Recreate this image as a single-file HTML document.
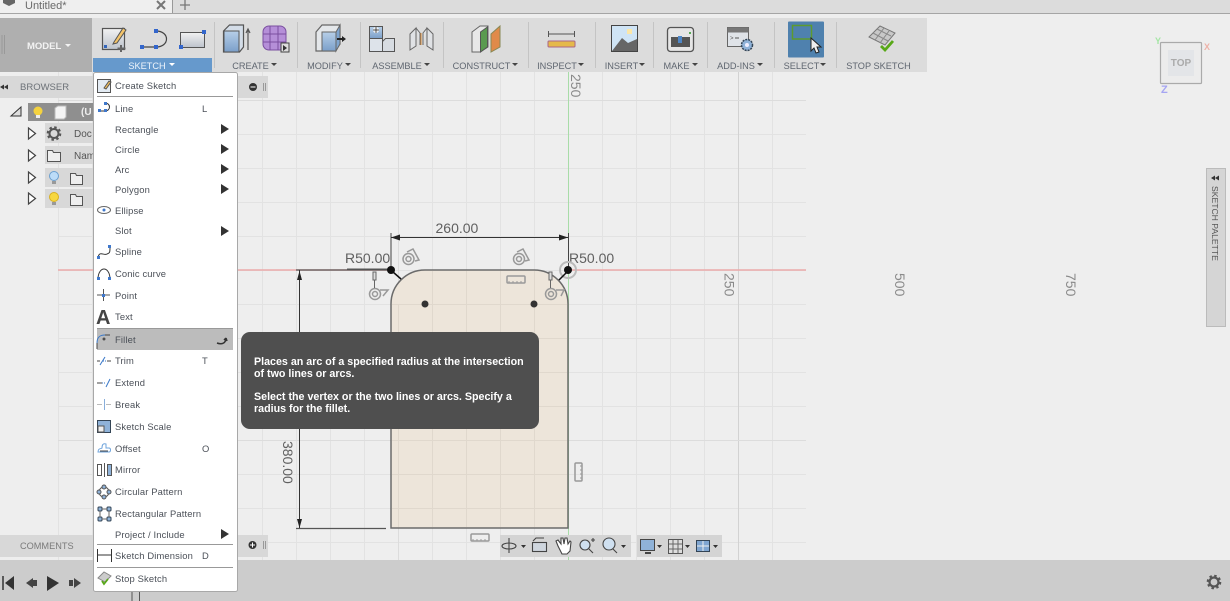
<!DOCTYPE html>
<html><head><meta charset="utf-8"><style>
html,body{margin:0;padding:0;width:1230px;height:601px;overflow:hidden;background:#eee}
svg{display:block;position:absolute;left:0;top:0;filter:blur(.3px)}
text{font-family:"Liberation Sans",sans-serif}
.m{font-size:9.4px;fill:#4b5058;letter-spacing:.15px}
.t{font-size:9.2px;fill:#5f6670;text-anchor:middle}
.d{font-size:14px;fill:#606060}
.a{font-size:14px;fill:#8a8a8a}
.tip{font-size:10.7px;font-weight:bold;fill:#fff}
</style></head><body>
<svg width="1230" height="601" viewBox="0 0 1230 601" xmlns="http://www.w3.org/2000/svg">
<defs>
<pattern id="g" x="58" y="32" width="34" height="34" patternUnits="userSpaceOnUse"><path d="M.5 0V34M0 .5H34" stroke="#e2e2e2" fill="none"/></pattern>
<linearGradient id="bl" x1="0" y1="0" x2="0" y2="1"><stop offset="0" stop-color="#b7cfe8"/><stop offset="1" stop-color="#7b9fc9"/></linearGradient>
<linearGradient id="gr" x1="0" y1="0" x2="0" y2="1"><stop offset="0" stop-color="#f2f2f2"/><stop offset="1" stop-color="#bdc3cc"/></linearGradient>
</defs>
<rect width="1230" height="601" fill="#eee"/>
<rect x="58" y="72" width="748" height="488" fill="url(#g)"/>
<path d="M398.500 72V560" stroke="#dcdcdc"/><path d="M738.500 72V560" stroke="#d2d2d2"/><path d="M58 100.500H806M58 440.500H806" stroke="#dcdcdc"/>
<path d="M58 270H391M568 270H806" stroke="#ebaaaa" stroke-width="1.500"/>
<path d="M568.500 72V560" stroke="#a8dca8"/>
<!-- top -->
<rect width="1230" height="13" fill="#dcdcdc"/><rect width="172" height="13" fill="#efefef"/>
<path d="M0 13.500H1230" stroke="#a5a5a5"/><path d="M172.500 0V13" stroke="#999"/>
<path d="M3 0H15V3L9 6 3 3Z" fill="#666"/>
<text x="25" y="9" font-size="11" fill="#6a6a6a">Untitled*</text>
<path d="M157 1l8 8M165 1l-8 8" stroke="#777" stroke-width="2"/>
<path d="M185 0V10M180 5H190" stroke="#777" stroke-width="1.300"/>
<!-- toolbar -->
<rect y="18" width="927" height="54" fill="#dcdcdc"/>
<rect y="18" width="92" height="54" fill="#afafaf"/>
<path d="M2 35V54M4.500 35V54" stroke="#999"/>
<text x="27" y="49" font-size="9.500" font-weight="bold" fill="#f3f3f3">MODEL</text><path d="M65 44h6l-3 3z" fill="#f3f3f3"/>
<rect x="93" y="58" width="119" height="14" fill="#6699cc"/>
<text x="147" y="69" font-size="9.200" fill="#eef4fb" text-anchor="middle">SKETCH</text><path d="M169 63h6l-3 3z" fill="#fff"/>
<!-- separators -->
<path d="M214.500 22V68M297.500 22V68M360.500 22V68M443.500 22V68M528.500 22V68M595.500 22V68M653.500 22V68M707.500 22V68M774.500 22V68M836.500 22V68" stroke="#c4c4c4" stroke-width="1"/>
<!-- labels -->
<text class="t" x="250.500" y="69">CREATE</text><path d="M271 63h6l-3 3z" fill="#444"/>
<text class="t" x="325" y="69">MODIFY</text><path d="M345 63h6l-3 3z" fill="#444"/>
<text class="t" x="397" y="69">ASSEMBLE</text><path d="M424 63h6l-3 3z" fill="#444"/>
<text class="t" x="481.500" y="69">CONSTRUCT</text><path d="M512 63h6l-3 3z" fill="#444"/>
<text class="t" x="557" y="69">INSPECT</text><path d="M578 63h6l-3 3z" fill="#444"/>
<text class="t" x="621.500" y="69">INSERT</text><path d="M639 63h6l-3 3z" fill="#444"/>
<text class="t" x="676.500" y="69">MAKE</text><path d="M692 63h6l-3 3z" fill="#444"/>
<text class="t" x="736" y="69">ADD-INS</text><path d="M757 63h6l-3 3z" fill="#444"/>
<text class="t" x="801.500" y="69">SELECT</text><path d="M820 63h6l-3 3z" fill="#444"/>
<text class="t" x="878.500" y="69">STOP SKETCH</text>
<!-- sketch icons -->
<rect x="102.500" y="28.500" width="22" height="21" fill="url(#gr)" stroke="#555" stroke-width="1.200"/>
<path d="M114 42l9-14 3 2-9 13-4 1z" fill="#f4c469" stroke="#555"/><path d="M121 45v7M117.500 48.500h8" stroke="#666" stroke-width="2"/>
<rect x="104" y="45" width="3" height="3" fill="#3366bb"/>
<path d="M141 47H156C170 47 170 31 156 31" fill="none" stroke="#444" stroke-width="1.200"/>
<g fill="#3366cc"><rect x="140" y="45" width="4" height="4"/><rect x="154" y="45" width="4" height="4"/><rect x="154" y="29" width="4" height="4"/></g>
<rect x="180.500" y="32.500" width="24" height="15" fill="url(#gr)" stroke="#555"/><rect x="179" y="45" width="4" height="4" fill="#3366cc"/><rect x="202" y="30" width="4" height="4" fill="#3366cc"/>
<!-- create -->
<path d="M223.500 31l6-6h14v22l-4 5H223.500z" fill="#d4dde8" stroke="#555" stroke-width="1.200"/><rect x="224" y="31" width="15" height="21" fill="url(#bl)" stroke="#555"/>
<path d="M248 50V30M246 33l2-4 2 4" stroke="#555" fill="none" stroke-width="1.200"/>
<rect x="263" y="26" width="23" height="24" rx="6" fill="#b58fd8" stroke="#7a4f9f"/><path d="M263 34h23M263 42h23M270 26v24M278 26v24" stroke="#7a4f9f"/>
<rect x="281" y="43" width="8" height="9" fill="#ddd" stroke="#444"/><path d="M283 45l4 3-4 3z" fill="#333"/>
<!-- modify -->
<path d="M316 32l6-7h18v19l-5 7H316z" fill="#e4e7ea" stroke="#666" stroke-width="1.200"/><path d="M322 32h14v19h-14z" fill="url(#bl)" stroke="#666"/><path d="M336 32l4-7v19l-4 7z" fill="#7fa5d0" stroke="#666"/><path d="M337 38h5v-2l4 3-4 3v-2h-5z" fill="#222"/>
<!-- assemble -->
<rect x="369.500" y="26.500" width="13" height="12" fill="url(#bl)" stroke="#555"/><rect x="369.500" y="38.500" width="13" height="13" fill="#dde3ea" stroke="#555"/><path d="M382.500 41.500l3-3h9v13h-12z" fill="#d7dce2" stroke="#555"/>
<path d="M373 30h6M376 27v6" stroke="#fff" stroke-width="3"/><path d="M373 30h6M376 27v6" stroke="#444"/>
<path d="M410 34l6-6v18l-6 4zM433 34l-6-6v18l6 4zM416 28l4 5v12M427 28l-4 5v12" fill="#e0e2e5" stroke="#666"/><path d="M421 33v12" stroke="#d58a3a"/>
<!-- construct -->
<path d="M472 32l8-6h8v21l-8 5H472z" fill="#e8e8e8" stroke="#666"/><path d="M480.500 32l7-5v20l-7 5z" fill="#5a9a50" stroke="#555"/>
<path d="M491 34l9-8v21l-9 5z" fill="#e08a4a" stroke="#885"/>
<!-- inspect -->
<path d="M548.500 31V37M574.500 31V37M548 34H575" stroke="#555"/><rect x="548" y="41" width="27" height="6" rx="1" fill="#e5b94a" stroke="#a68"/>
<!-- insert -->
<rect x="611.500" y="25.500" width="26" height="26" fill="#cfe4f5" stroke="#444"/><path d="M612 51l10-13 6 5 9-4v12z" fill="#666"/><rect x="627" y="29" width="5" height="5" fill="#fce7a8"/>
<!-- make -->
<rect x="667.500" y="27.500" width="26" height="24" rx="3" fill="#e6e6e6" stroke="#555" stroke-width="1.300"/><rect x="671" y="37" width="19" height="10" fill="#555"/><rect x="678" y="36" width="4" height="7" fill="#4f87c7"/><rect x="689" y="32" width="2" height="2" fill="#5a5"/>
<!-- add-ins -->
<rect x="727.500" y="27.500" width="21" height="19" fill="#dfe3e8" stroke="#666"/><rect x="727.500" y="27.500" width="21" height="5" fill="#777"/><text x="730" y="40" font-size="6" fill="#555">&gt;</text><path d="M735 38h4" stroke="#555"/>
<circle cx="747" cy="45" r="5.500" fill="#8fb2d8" stroke="#345" stroke-dasharray="2 1" stroke-width="1.500"/><circle cx="747" cy="45" r="2" fill="#eef"/>
<!-- select -->
<rect x="788" y="21.500" width="36" height="36" rx="1" fill="#4f81ae"/><rect x="792.500" y="25.500" width="19" height="13.500" fill="none" stroke="#5d9a2e" stroke-width="1.500"/>
<path d="M811 38v13l3-3 2 5 3-1-2-5h4z" fill="#eee" stroke="#222"/>
<!-- stop -->
<path d="M869 37l11-11 15 7-10 12z" fill="#c8c8c8" stroke="#777"/><path d="M873 33l15 8M877 29l14 7M875 40l9-12M880 43l9-12" stroke="#888"/>
<path d="M881 46l4 4 8-9" fill="none" stroke="#58a818" stroke-width="2.800"/>
<!-- browser -->
<rect y="76" width="268" height="22" fill="#d8d8d8"/>
<path d="M4 86l4-2.500v5zM8 86l4-2.500v5z" transform="translate(-4 1)" fill="#333"/>
<text x="20" y="90" font-size="9.500" fill="#6d7278">BROWSER</text>
<circle cx="253" cy="87" r="4" fill="#333"/><path d="M250.500 87h5" stroke="#fff"/><path d="M263.500 83V91M265.500 83V91" stroke="#999"/>
<path d="M11 116l10-9v9z" fill="#ddd" stroke="#333"/>
<rect x="28" y="103" width="66" height="18" fill="#8f8f8f"/>
<circle cx="38" cy="111" r="4.500" fill="#f4d23f"/><rect x="36" y="115" width="4" height="3" fill="#eee"/>
<path d="M55 108l3-2h8v11l-2 2H55z" fill="#f4f4f4" stroke="#bbb"/>
<text x="81" y="115" font-size="10" font-weight="bold" fill="#eee">(U</text>
<g fill="#fff" stroke="#444" stroke-width="1.200"><path d="M28.500 128v11l7-5.500z"/><path d="M28.500 150v11l7-5.500z"/><path d="M28.500 172v11l7-5.500z"/><path d="M28.500 193v11l7-5.500z"/></g>
<rect x="45" y="123" width="49" height="20" fill="#d8d8d8"/><rect x="45" y="146" width="49" height="18" fill="#d8d8d8"/><rect x="45" y="168" width="49" height="19" fill="#d8d8d8"/><rect x="45" y="189" width="49" height="19" fill="#d8d8d8"/>
<circle cx="54" cy="133.500" r="4.500" fill="none" stroke="#555" stroke-width="2"/><circle cx="54" cy="133.500" r="6.300" fill="none" stroke="#555" stroke-width="2" stroke-dasharray="2.500 2.450"/>
<text x="74" y="137" font-size="10" fill="#555">Doc</text><text x="74" y="159" font-size="10" fill="#555">Nam</text>
<path d="M47.500 150.500h5l1 2h7v9h-13z" fill="#eee" stroke="#555"/>
<circle cx="54" cy="176" r="4.500" fill="#bcdcf8" stroke="#6a9fd0"/><rect x="52" y="181" width="4" height="3" fill="#999"/>
<path d="M70.500 173.500h5l1 2h6v9h-12z" fill="#eee" stroke="#555"/>
<circle cx="54" cy="197" r="4.500" fill="#f7d73f" stroke="#d8b020"/><rect x="52" y="202" width="4" height="3" fill="#999"/>
<path d="M70.500 194.500h5l1 2h6v9h-12z" fill="#eee" stroke="#555"/>
<!-- comments -->
<rect y="535" width="268" height="22" fill="#d8d8d8"/>
<text x="20" y="549" font-size="9.200" fill="#7a7a7a">COMMENTS</text>
<circle cx="252.500" cy="545" r="4" fill="#333"/><path d="M250 545h5M252.500 542.500v5" stroke="#fff"/><path d="M263.500 541V549M265.500 541V549" stroke="#999"/>
<!-- bottom -->
<rect y="560" width="1230" height="41" fill="#cccccc"/>
<path d="M3 576V590" stroke="#333" stroke-width="1.500"/><path d="M14 576v14l-9-7z" fill="#333"/>
<path d="M26 583l7-5v10zM33 580h4v6h-4z" fill="#444"/><path d="M47 576l12 7-12 8z" fill="#333"/>
<path d="M81 583l-7-5v10zM69 580h4v6h-4z" fill="#444"/>
<path d="M132 592V601M139.500 592V601" stroke="#555"/>
<circle cx="1214" cy="582" r="4.500" fill="none" stroke="#555" stroke-width="2.200"/><circle cx="1214" cy="582" r="6.300" fill="none" stroke="#555" stroke-width="2" stroke-dasharray="2.500 2.450"/>
<!-- axis labels -->
<text class="a" transform="translate(571 74) rotate(90)">250</text>
<text class="a" transform="translate(724.500 273) rotate(90)">250</text>
<text class="a" transform="translate(895 273) rotate(90)">500</text>
<text class="a" transform="translate(1066 273) rotate(90)">750</text>
<!-- sketch -->
<path d="M391 528V304A34 34 0 0 1 425 270H534A34 34 0 0 1 568 304V528Z" fill="#ede5da"/>
<g stroke="#e0d8cd"><path d="M398.500 304V527M432.500 271V527M466.500 271V527M500.500 271V527M534.500 271V527M392 304.500H567M392 338.500H567M392 372.500H567M392 406.500H567M392 440.500H567M392 474.500H567M392 508.500H567"/></g>
<path d="M391 528V304A34 34 0 0 1 425 270H534A34 34 0 0 1 568 304V528Z" fill="none" stroke="#6b6b6b" stroke-width="1.500"/>
<path d="M391 233V270M568.500 233V270" stroke="#444"/>
<path d="M391 237.500H568" stroke="#333"/><path d="M391 237.500l9-3v6zM568 237.500l-9-3v6z" fill="#222"/>
<text class="d" x="435.500" y="233">260.00</text>
<text class="d" x="345" y="263">R50.00</text>
<text class="d" x="569" y="263">R50.00</text>
<path d="M347 269.500H391" stroke="#555" stroke-width="2"/>
<path d="M296 270H391M296 528.500H386" stroke="#555" stroke-width="1.200"/>
<path d="M299.500 270V528" stroke="#333"/><path d="M299.500 271l-2.500 9h5zM299.500 528l-2.500-9h5z" fill="#222"/>
<text class="d" transform="translate(283 441) rotate(90)">380.00</text>
<circle cx="391" cy="270" r="4" fill="#111"/><path d="M393 272l8 7" stroke="#111" stroke-width="1.500"/>
<circle cx="568" cy="270" r="8" fill="none" stroke="#bbb" stroke-width="2"/>
<circle cx="568" cy="270" r="4" fill="#111"/><path d="M566 273l-7 7" stroke="#111" stroke-width="1.500"/>
<circle cx="425" cy="304" r="3.500" fill="#333"/><circle cx="534" cy="304" r="3.500" fill="#333"/>
<g fill="none" stroke="#999" stroke-width="1.500">
<circle cx="408.500" cy="259" r="5.500"/><circle cx="408.500" cy="259" r="2.500"/><path d="M407 252l6-3 6 11-4 1"/>
<circle cx="519" cy="259" r="5.500"/><circle cx="519" cy="259" r="2.500"/><path d="M517 252l6-3 6 11-4 1"/>
<circle cx="375" cy="294" r="5.500"/><circle cx="375" cy="294" r="2.500"/><path d="M380 290h8l-5 6"/>
<circle cx="551" cy="294" r="5.500"/><circle cx="551" cy="294" r="2.500"/><path d="M556 290h8l-3 6"/>
<rect x="507" y="276" width="18" height="7" rx="1"/><rect x="471" y="534" width="18" height="7" rx="1"/><rect x="575" y="463" width="7" height="18" rx="1"/>
<path d="M509 281v2M513 281v2M517 281v2M521 281v2M473 539v2M477 539v2M481 539v2M485 539v2M580 466h2M580 470h2M580 474h2M580 478h2" stroke-width="1"/>
</g>
<path d="M373 272h3v8h-3zM549 272h3v8h-3zM374.500 280v8M550.500 280v8" stroke="#666" fill="#ddd"/>
<!-- tip -->
<rect x="241" y="332" width="298" height="97" rx="9" fill="#4f4f4f"/>
<text class="tip" x="254" y="365">Places an arc of a specified radius at the intersection</text>
<text class="tip" x="254" y="377">of two lines or arcs.</text>
<text class="tip" x="254" y="400">Select the vertex or the two lines or arcs. Specify a</text>
<text class="tip" x="254" y="412">radius for the fillet.</text>
<!-- nav -->
<rect x="500" y="535" width="131" height="22" fill="#d4d4d4"/><rect x="637" y="535" width="85" height="22" fill="#d4d4d4"/>
<g fill="none" stroke="#444" stroke-width="1.100">
<ellipse cx="509" cy="546" rx="7" ry="3"/><path d="M509 538v15"/>
<path d="M533 541l3-3h8"/><rect x="532.500" y="542.500" width="14" height="9" fill="#cfd6de"/>
<path d="M558 546l-2-5 2-1 3 4 0-6 2 0 1 6 1-6 2 0 1 6 2-3 1 1-1 9-3 3h-5z" fill="#fff"/>
<circle cx="585" cy="545" r="5" fill="#cfe0f0"/><path d="M589 549l4 4M591 540h4M593 538v4"/>
<circle cx="609" cy="544" r="6" fill="#cfe0f0"/><path d="M613 549l4 4"/>
</g>
<path d="M521 545h5l-2.500 3zM621 545h5l-2.500 3zM657 545h5l-2.500 3zM685 545h5l-2.500 3zM713 545h5l-2.500 3z" fill="#333"/>
<rect x="640.500" y="539.500" width="14" height="11" fill="#8fb2d8" stroke="#444"/><path d="M645 553h6" stroke="#444" stroke-width="2"/>
<rect x="668.500" y="539.500" width="14" height="14" fill="#ddd" stroke="#555"/><path d="M673 540v13M678 540v13M669 544h13M669 549h13" stroke="#666"/>
<rect x="696.500" y="540.500" width="13" height="11" fill="#7fa5d0" stroke="#345"/><path d="M703 541v10M697 546h12" stroke="#eee"/>
<!-- viewcube -->
<rect x="1160.500" y="42.500" width="41" height="41" rx="1" fill="#ececec" stroke="#aaa" stroke-width="1.200"/><rect x="1168" y="50" width="26" height="26" fill="#e3e5e8"/>
<text x="1181" y="66" font-size="10" font-weight="bold" fill="#aaa" text-anchor="middle">TOP</text>
<text x="1155" y="44" font-size="9" font-weight="bold" fill="#a5e6a5">Y</text><text x="1204" y="50" font-size="9" font-weight="bold" fill="#eeb2a8">X</text><text x="1161" y="93" font-size="11" font-weight="bold" fill="#a5a5f2">Z</text>
<!-- palette -->
<rect x="1206.500" y="168.500" width="19" height="158" fill="#d5d5d5" stroke="#bbb"/>
<path d="M1211 178l4-2.500v5zM1215 178l4-2.500v5z" fill="#333"/>
<text transform="translate(1212 186) rotate(90)" font-size="8.600" fill="#555">SKETCH PALETTE</text>
<!-- menu -->
<rect x="93.500" y="72.500" width="144" height="519" rx="2" fill="#fff" stroke="#a8a8a8"/>
<rect x="97" y="328" width="136" height="22" fill="#bcbcbc"/><path d="M97 328.500H233" stroke="#999"/>
<path d="M97 96.500H233M97 544.500H233M97 567.500H233" stroke="#999"/>
<g class="mt">
<text class="m" x="115" y="89">Create Sketch</text>
<text class="m" x="115" y="112">Line</text><text class="m" x="202" y="112">L</text>
<text class="m" x="115" y="133">Rectangle</text>
<text class="m" x="115" y="153">Circle</text>
<text class="m" x="115" y="173">Arc</text>
<text class="m" x="115" y="193">Polygon</text>
<text class="m" x="115" y="214">Ellipse</text>
<text class="m" x="115" y="234">Slot</text>
<text class="m" x="115" y="255">Spline</text>
<text class="m" x="115" y="277">Conic curve</text>
<text class="m" x="115" y="299">Point</text>
<text class="m" x="115" y="320">Text</text>
<text class="m" x="115" y="343">Fillet</text>
<text class="m" x="115" y="364">Trim</text><text class="m" x="202" y="364">T</text>
<text class="m" x="115" y="386">Extend</text>
<text class="m" x="115" y="408">Break</text>
<text class="m" x="115" y="430">Sketch Scale</text>
<text class="m" x="115" y="452">Offset</text><text class="m" x="202" y="452">O</text>
<text class="m" x="115" y="473">Mirror</text>
<text class="m" x="115" y="495">Circular Pattern</text>
<text class="m" x="115" y="517">Rectangular Pattern</text>
<text class="m" x="115" y="538">Project / Include</text>
<text class="m" x="115" y="559">Sketch Dimension</text><text class="m" x="202" y="559">D</text>
<text class="m" x="115" y="582">Stop Sketch</text>
</g>
<path d="M221 124l8 5-8 5zM221 144l8 5-8 5zM221 164l8 5-8 5zM221 184l8 5-8 5zM221 226l8 5-8 5zM221 529l8 5-8 5z" fill="#333"/>
<!-- menu icons -->
<g fill="none" stroke="#555">
<rect x="97.500" y="79.500" width="13" height="13" fill="#e3ebf3"/><path d="M104 88l5-7 2 1-5 7z" fill="#f2c060"/>
<path d="M99 111h6C111 111 111 103 105 103" stroke="#333"/>
<ellipse cx="104" cy="210" rx="6.500" ry="3.500" stroke="#666"/>
<path d="M98 258c1-8 6-2 9-4 3-1 3-2 3-7" stroke="#333"/>
<path d="M98 278c1-12 11-12 12 0" stroke="#333"/>
<path d="M97 295H110M103.500 289V301" stroke="#555"/>
<path d="M97 343c0-6 3-8 8-8" stroke="#3a78c8"/><path d="M105 335h5M97 343v6" stroke="#444"/><circle cx="104" cy="339" r="1" fill="#333"/>
<path d="M217 343c5 2 9 0 9-5M226 338l-2 2M226 338l1 3" stroke="#333" stroke-width="1.500"/>
<path d="M97 361h3M107 361h4" stroke="#444"/><path d="M100 365l5-8" stroke="#3a78c8"/><path d="M103 361h3" stroke="#3a78c8" stroke-dasharray="1 1"/>
<path d="M97 383h5" stroke="#444"/><path d="M102 383h4" stroke="#3a78c8" stroke-dasharray="1 1"/><path d="M106 387l4-8" stroke="#3a78c8"/>
<path d="M97 404.500h5M106 404.500h5" stroke="#bbb"/><path d="M104.500 399v11" stroke="#88aedb"/>
<rect x="97.500" y="420.500" width="13" height="12" fill="#8fb2d8" stroke="#345"/><rect x="98" y="426" width="6" height="6" fill="#eee"/>
<path d="M98 452c0-4 3-3 4-4 0-3 1-5 4-4v4h3c2 0 2 4 0 4z" stroke="#6fa4dc"/><path d="M100 451h8" stroke="#444"/>
<rect x="97.500" y="464.500" width="4" height="11"/><path d="M104.500 463V477"/><rect x="107.500" y="464.500" width="4" height="11" fill="#8fb2d8"/>
<circle cx="104" cy="492" r="5"/><g fill="#8fb2d8"><circle cx="104" cy="487" r="2"/><circle cx="99" cy="492" r="2"/><circle cx="109" cy="492" r="2"/><circle cx="104" cy="497" r="2"/></g>
<g fill="#8fb2d8" stroke="#345"><rect x="98" y="507" width="4" height="4" rx="1"/><rect x="107" y="507" width="4" height="4" rx="1"/><rect x="98" y="517" width="4" height="4" rx="1"/><rect x="107" y="517" width="4" height="4" rx="1"/></g>
<path d="M102 509h5M102 519h5M100 511v6M109 511v6" stroke="#666"/>
<path d="M97.500 549V562M111.500 549V562M98 555H111" stroke="#333"/>
<path d="M98 578l6-6 7 4-6 6z" fill="#ccc" stroke="#888"/><path d="M102 581l2 3 4-5" stroke="#58a818" stroke-width="1.800"/>
</g>
<g fill="#3f78cc"><rect x="98" y="109" width="3" height="3"/><rect x="104" y="109" width="3" height="3"/><rect x="104" y="102" width="3" height="3"/><circle cx="104" cy="210" r="1.500"/><rect x="97" y="256" width="3" height="3"/><rect x="108" y="245" width="3" height="3"/><rect x="97" y="277" width="3" height="3"/><rect x="108" y="277" width="3" height="3"/><rect x="102" y="294" width="3" height="3"/></g>
<text x="96" y="324" font-size="20" font-weight="bold" fill="#444">A</text>
</svg>
</body></html>
